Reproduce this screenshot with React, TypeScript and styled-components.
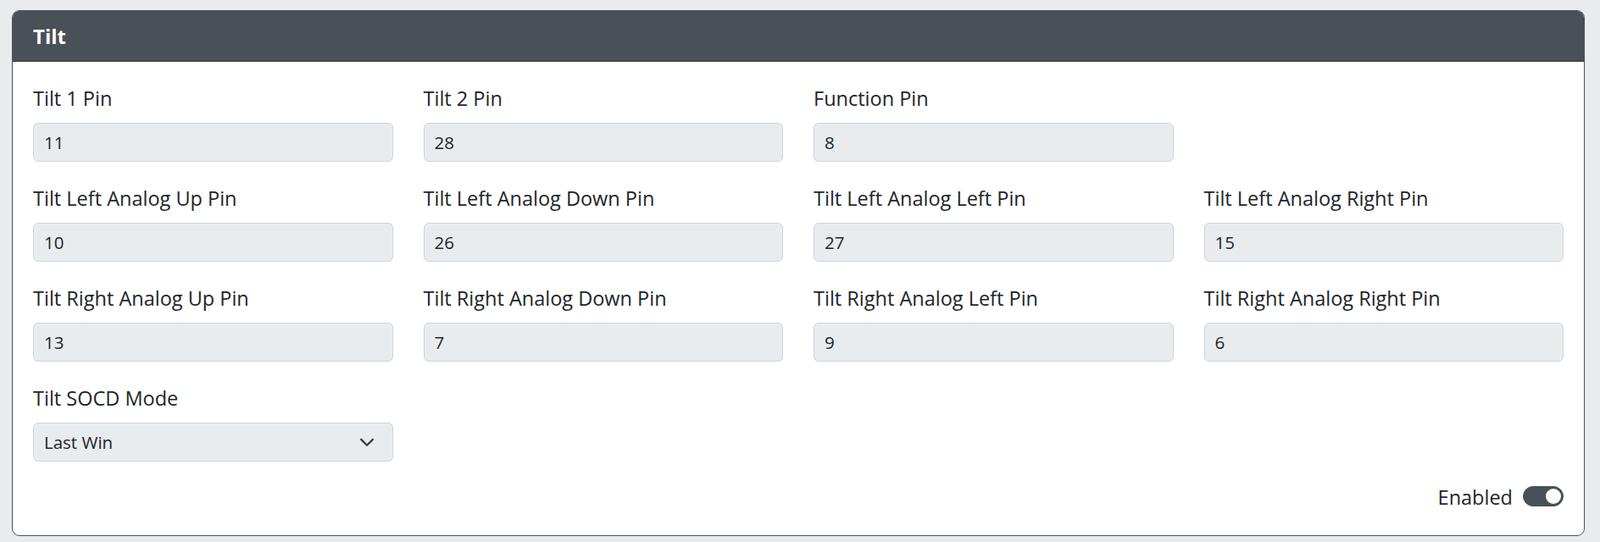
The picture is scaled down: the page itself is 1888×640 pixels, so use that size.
import React from "react";
import styled, { createGlobalStyle } from "styled-components";

const GlobalStyle = createGlobalStyle`
  html, body {
    margin: 0;
    padding: 0;
    background: #e9ecef;
  }
  body {
    font-family: "Open Sans", "Noto Sans", "Liberation Sans", sans-serif;
    color: #212529;
  }
  * { box-sizing: border-box; }
`;

const Page = styled.div`
  padding: 12px 18px 9px 14px;
`;

const Card = styled.section`
  background: #fff;
  border: 1.5px solid #495057;
  border-radius: 9px;
  overflow: hidden;
`;

const CardHeader = styled.header`
  background: #495057;
  color: #fff;
  padding: 12px 24px 11px;
  font-size: 24px;
  line-height: 36px;
  font-weight: 700;
  border-bottom: 1px solid rgba(0, 0, 0, 0.175);
`;

const CardBody = styled.div`
  padding: 24px 24px 27px;
`;

const Grid = styled.div`
  display: grid;
  grid-template-columns: repeat(4, minmax(0, 1fr));
  column-gap: 36px;
`;

const Field = styled.div`
  margin-bottom: 24px;
  min-width: 0;
`;

const Label = styled.label`
  display: block;
  font-size: 23.5px;
  line-height: 36px;
  padding-top: 1px;
  margin-bottom: 11px;
  color: #212529;
  white-space: nowrap;
`;

const Input = styled.input`
  display: block;
  width: 100%;
  height: 46px;
  padding: 6px 12px;
  font-family: inherit;
  font-size: 20.5px;
  line-height: 31px;
  color: #212529;
  background: #e9ecef;
  border: 1.5px solid #ced4da;
  border-radius: 6px;
  outline: none;
`;

const SelectWrap = styled.div`
  position: relative;
`;

const Select = styled.select`
  display: block;
  width: 100%;
  height: 46px;
  padding: 6px 48px 6px 12px;
  font-family: inherit;
  font-size: 20.5px;
  line-height: 31px;
  color: #212529;
  background: #e9ecef;
  border: 1.5px solid #ced4da;
  border-radius: 6px;
  appearance: none;
  -webkit-appearance: none;
  outline: none;
`;

const Chevron = styled.svg`
  position: absolute;
  right: 20px;
  top: 50%;
  margin-top: -10px;
  width: 22px;
  height: 20px;
  pointer-events: none;
`;

const Footer = styled.div`
  display: flex;
  justify-content: flex-end;
  align-items: flex-start;
  gap: 12px;
`;

const SwitchLabel = styled.span`
  font-size: 23.5px;
  line-height: 36px;
  color: #212529;
`;

const Switch = styled.span<{ $on: boolean }>`
  position: relative;
  display: inline-block;
  width: 48px;
  height: 24px;
  margin-top: 5px;
  border-radius: 12px;
  background: ${(p) => (p.$on ? "#495057" : "#fff")};
  border: 1.5px solid #495057;

  &::after {
    content: "";
    position: absolute;
    top: 1.5px;
    left: ${(p) => (p.$on ? "25.5px" : "1.5px")};
    width: 18px;
    height: 18px;
    border-radius: 50%;
    background: ${(p) => (p.$on ? "#fff" : "#495057")};
  }
`;

type FieldDef = { label: string; value: string } | null;

const rows: FieldDef[][] = [
  [
    { label: "Tilt 1 Pin", value: "11" },
    { label: "Tilt 2 Pin", value: "28" },
    { label: "Function Pin", value: "8" },
    null,
  ],
  [
    { label: "Tilt Left Analog Up Pin", value: "10" },
    { label: "Tilt Left Analog Down Pin", value: "26" },
    { label: "Tilt Left Analog Left Pin", value: "27" },
    { label: "Tilt Left Analog Right Pin", value: "15" },
  ],
  [
    { label: "Tilt Right Analog Up Pin", value: "13" },
    { label: "Tilt Right Analog Down Pin", value: "7" },
    { label: "Tilt Right Analog Left Pin", value: "9" },
    { label: "Tilt Right Analog Right Pin", value: "6" },
  ],
];

export default function App() {
  return (
    <>
      <GlobalStyle />
      <Page>
        <Card>
          <CardHeader>Tilt</CardHeader>
          <CardBody>
            <Grid>
              {rows.flat().map((f, i) =>
                f ? (
                  <Field key={i}>
                    <Label>{f.label}</Label>
                    <Input type="text" defaultValue={f.value} readOnly />
                  </Field>
                ) : (
                  <div key={i} />
                )
              )}
              <Field>
                <Label>Tilt SOCD Mode</Label>
                <SelectWrap>
                  <Select defaultValue="last">
                    <option value="up">Up Priority</option>
                    <option value="neutral">Neutral</option>
                    <option value="last">Last Win</option>
                  </Select>
                  <Chevron viewBox="0 0 16 16">
                    <path
                      d="M2.5 5.5 8 11l5.5-5.5"
                      fill="none"
                      stroke="#343a40"
                      strokeWidth="1.8"
                      strokeLinecap="round"
                      strokeLinejoin="round"
                    />
                  </Chevron>
                </SelectWrap>
              </Field>
            </Grid>
            <Footer>
              <SwitchLabel>Enabled</SwitchLabel>
              <Switch $on={true} role="switch" aria-checked="true" />
            </Footer>
          </CardBody>
        </Card>
      </Page>
    </>
  );
}
